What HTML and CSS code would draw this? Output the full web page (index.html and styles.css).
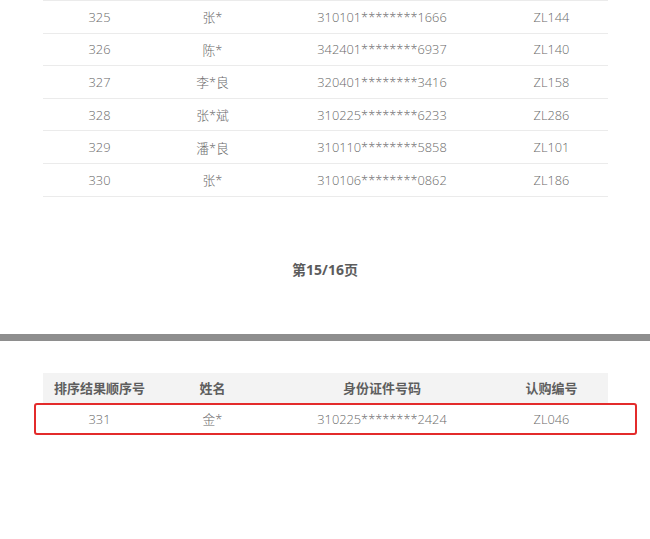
FILE: index.html
```html
<!DOCTYPE html>
<html lang="zh-CN">
<head>
<meta charset="utf-8">
<title>排序结果</title>
<link rel="stylesheet" href="styles.css">
</head>
<body>
<div class="page">
  <section class="list first">
    <div class="row"><span>325</span><span>张*</span><span>310101********1666</span><span>ZL144</span></div>
    <div class="row"><span>326</span><span>陈*</span><span>342401********6937</span><span>ZL140</span></div>
    <div class="row"><span>327</span><span>李*良</span><span>320401********3416</span><span>ZL158</span></div>
    <div class="row"><span>328</span><span>张*斌</span><span>310225********6233</span><span>ZL286</span></div>
    <div class="row"><span>329</span><span>潘*良</span><span>310110********5858</span><span>ZL101</span></div>
    <div class="row"><span>330</span><span>张*</span><span>310106********0862</span><span>ZL186</span></div>
  </section>
  <div class="pager">第15/16页</div>
  <div class="divider"></div>
  <section class="list second">
    <div class="row head"><span>排序结果顺序号</span><span>姓名</span><span>身份证件号码</span><span>认购编号</span></div>
    <div class="row mark"><span>331</span><span>金*</span><span>310225********2424</span><span>ZL046</span></div>
  </section>
</div>
</body>
</html>
```
FILE: styles.css
```css
html, body {
  margin: 0;
  padding: 0;
  background: #ffffff;
}
body {
  font-family: "Open Sans", "Noto Sans CJK SC", sans-serif;
  font-size: 13px;
  color: #6a6a6a;
}
.page {
  width: 650px;
}
.list {
  margin: 0 42px 0 43px;
}
.row {
  display: grid;
  grid-template-columns: 1fr 1fr 2fr 1fr;
  align-items: center;
  text-align: center;
  height: 32.6px;
  box-sizing: border-box;
  border-bottom: 1px solid #ebebeb;
  font-weight: 300;
  font-size: 12.8px;
}
.first {
  border-top: 1px solid #ebebeb;
}
.pager {
  margin-top: 63px;
  height: 20px;
  line-height: 20px;
  text-align: center;
  font-weight: bold;
  color: #5c5c5c;
  font-size: 14px;
}
.divider {
  margin-top: 54px;
  height: 7px;
  background: #8e8e8e;
}
.second {
  margin-top: 32px;
}
.head {
  height: 30px;
  background: #f3f3f3;
  border-bottom: none;
  font-weight: bold;
  font-size: 13px;
  color: #5e5e5e;
}
.mark {
  position: relative;
  height: 32px;
  border-bottom: none;
}
.mark::after {
  content: "";
  position: absolute;
  left: -9px;
  right: -29px;
  top: 0;
  bottom: 0;
  border: 2px solid #e32b2b;
  border-radius: 3px;
}
```
